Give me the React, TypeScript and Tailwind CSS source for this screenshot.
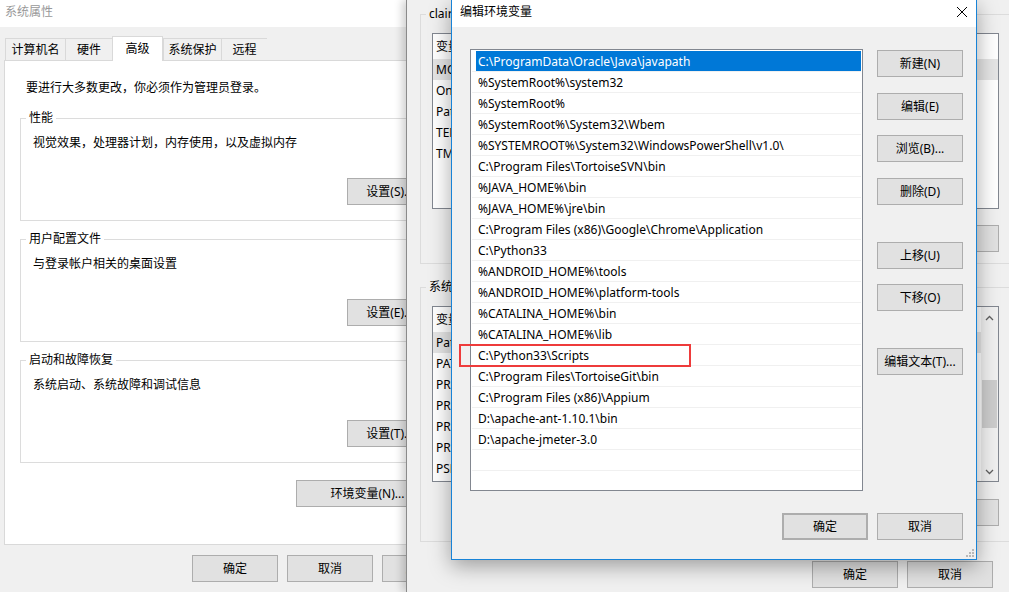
import React from 'react';

const FONT = "font-['Noto_Sans','Noto_Sans_CJK_SC',sans-serif]";

function Btn({ children, className = '', dim = false }: { children?: React.ReactNode; className?: string; dim?: boolean }) {
  return (
    <div
      className={`h-[27px] shrink-0 flex items-center justify-center bg-[#e1e1e1] border border-[#adadad] text-[12px] leading-none ${dim ? 'text-[#a0a0a0]' : 'text-black'} ${className}`}
    >
      {children}
    </div>
  );
}

function Group({ label, className = '', children }: { label: string; className?: string; children?: React.ReactNode }) {
  return (
    <fieldset className={`border border-[#dcdcdc] ${className}`}>
      <legend className="ml-[5px] px-[3px] text-[12px] leading-[16px]">{label}</legend>
      {children}
    </fieldset>
  );
}

const pathItems = [
  'C:\\ProgramData\\Oracle\\Java\\javapath',
  '%SystemRoot%\\system32',
  '%SystemRoot%',
  '%SystemRoot%\\System32\\Wbem',
  '%SYSTEMROOT%\\System32\\WindowsPowerShell\\v1.0\\',
  'C:\\Program Files\\TortoiseSVN\\bin',
  '%JAVA_HOME%\\bin',
  '%JAVA_HOME%\\jre\\bin',
  'C:\\Program Files (x86)\\Google\\Chrome\\Application',
  'C:\\Python33',
  '%ANDROID_HOME%\\tools',
  '%ANDROID_HOME%\\platform-tools',
  '%CATALINA_HOME%\\bin',
  '%CATALINA_HOME%\\lib',
  'C:\\Python33\\Scripts',
  'C:\\Program Files\\TortoiseGit\\bin',
  'C:\\Program Files (x86)\\Appium',
  'D:\\apache-ant-1.10.1\\bin',
  'D:\\apache-jmeter-3.0',
  '',
  '',
];

const userVars = [
  ['MOZ_PLUGIN_PATH', 'C:\\Program Files (x86)\\Foxit Software\\plugins\\'],
  ['OneDrive', 'C:\\Users\\claire\\OneDrive'],
  ['Path', 'C:\\Users\\claire\\AppData\\Local\\Microsoft\\WindowsApps;'],
  ['TEMP', '%USERPROFILE%\\AppData\\Local\\Temp'],
  ['TMP', '%USERPROFILE%\\AppData\\Local\\Temp'],
];

const sysVars = [
  ['Path', 'C:\\ProgramData\\Oracle\\Java\\javapath;%SystemRoot%'],
  ['PATHEXT', '.COM;.EXE;.BAT;.CMD;.VBS;.VBE;.JS'],
  ['PROCESSOR_ARCHITECTURE', 'AMD64'],
  ['PROCESSOR_IDENTIFIER', 'Intel64 Family 6 Model 60'],
  ['PROCESSOR_LEVEL', '6'],
  ['PROCESSOR_REVISION', '3c03'],
  ['PSModulePath', '%ProgramFiles%\\WindowsPowerShell\\Modules'],
];

function VarList({ rows, scroll = false }: { rows: string[][]; scroll?: boolean }) {
  return (
    <div className="ml-[11px] w-[567px] h-[176px] border border-[#828790] bg-white flex">
      <div className="flex-1 overflow-hidden">
        <div className="h-[25px] flex items-center pl-[3px] pt-[1px] text-[12px]">
          <span className="w-[160px]">变量</span>
          <span>值</span>
        </div>
        {rows.map((r, i) => (
          <div key={i} className={`h-[21px] flex items-center pl-[3px] pt-[1px] text-[12px] ${i === 0 ? 'bg-[#e5e5e5]' : ''}`}>
            <span className="w-[160px] whitespace-nowrap">{r[0]}</span>
            <span className="whitespace-nowrap">{r[1]}</span>
          </div>
        ))}
      </div>
      {scroll && (
        <div className="w-[17px] h-full bg-[#f0f0f0] flex flex-col items-center">
          <svg width="9" height="6" viewBox="0 0 9 6" className="mt-[8px]">
            <path d="M1 5 L4.5 1.5 L8 5" fill="none" stroke="#606060" strokeWidth="1.3" />
          </svg>
          <div className="mt-[59px] w-[15px] h-[48px] bg-[#cdcdcd]" />
          <div className="flex-1" />
          <svg width="9" height="6" viewBox="0 0 9 6" className="mb-[6px]">
            <path d="M1 1 L4.5 4.5 L8 1" fill="none" stroke="#606060" strokeWidth="1.3" />
          </svg>
        </div>
      )}
    </div>
  );
}

function SystemProperties() {
  const tabs = [
    { t: '计算机名', w: 'w-[60px]' },
    { t: '硬件', w: 'w-[47px]' },
    { t: '高级', w: 'w-[51px]', active: true },
    { t: '系统保护', w: 'w-[58px]' },
    { t: '远程', w: 'w-[46px]' },
  ];
  return (
    <div className="absolute left-0 top-0 w-[406px] h-[592px] overflow-hidden bg-[#f0f0f0]">
      <div className="w-[440px]">
        <div className="h-[27px] bg-white pl-[5px] pb-[3px] flex items-center text-[12px] text-[#999]">系统属性</div>
        <div className="mt-[9px] pl-[5px] h-[24px] flex items-end relative z-10">
          {tabs.map((tab) =>
            tab.active ? (
              <div key={tab.t} className={`${tab.w} h-[25px] -mb-[1px] bg-white border border-b-0 border-[#d9d9d9] flex items-start justify-center pt-[3px] text-[12px]`}>
                {tab.t}
              </div>
            ) : (
              <div key={tab.t} className={`${tab.w} h-[22px] bg-[#f0f0f0] border border-b-0 border-r-0 border-[#d9d9d9] flex items-center justify-center pt-[1px] text-[12px]`}>
                {tab.t}
              </div>
            )
          )}
        </div>
        <div className="mx-[4px] h-[485px] bg-white border border-[#d9d9d9] pl-[15px] pt-[19px]">
          <div className="pl-[6px] text-[12px] leading-[16px]">要进行大多数更改，你必须作为管理员登录。</div>
          <Group label="性能" className="mt-[14px] w-[420px] pb-[15px]">
            <div className="mt-[9px] pl-[12px] text-[12px] leading-[16px]">视觉效果，处理器计划，内存使用，以及虚拟内存</div>
            <Btn className="mt-[27px] ml-[326px] w-[86px]">设置(S)...</Btn>
          </Group>
          <Group label="用户配置文件" className="mt-[10px] w-[420px] pb-[15px]">
            <div className="mt-[9px] pl-[12px] text-[12px] leading-[16px]">与登录帐户相关的桌面设置</div>
            <Btn className="mt-[27px] ml-[326px] w-[86px]">设置(E)...</Btn>
          </Group>
          <Group label="启动和故障恢复" className="mt-[10px] w-[420px] pb-[15px]">
            <div className="mt-[9px] pl-[12px] text-[12px] leading-[16px]">系统启动、系统故障和调试信息</div>
            <Btn className="mt-[27px] ml-[326px] w-[86px]">设置(T)...</Btn>
          </Group>
          <Btn className="mt-[17px] ml-[276px] w-[137px] pl-[6px]">环境变量(N)...</Btn>
        </div>
        <div className="mt-[10px] pl-[192px] flex gap-[9px]">
          <Btn className="w-[86px]">确定</Btn>
          <Btn className="w-[86px]">取消</Btn>
          <Btn className="w-[86px] bg-[#cfcfcf]" dim>应用(A)</Btn>
        </div>
      </div>
    </div>
  );
}

function EnvVariables() {
  return (
    <div className="absolute left-[406px] top-0 w-[700px] h-[592px] bg-[#f0f0f0] border-l border-[#8a8a8a] shadow-[-4px_0_8px_rgba(0,0,0,0.18)]">
      <Group label="claire 的用户变量(U)" className="ml-[13px] mt-[6px] w-[600px] pb-[11px]">
        <div className="mt-[11px]">
          <VarList rows={userVars} />
        </div>
        <div className="mt-[16px] ml-[11px] w-[567px] flex justify-end gap-[8px]">
          <Btn className="w-[86px]">新建(N)...</Btn>
          <Btn className="w-[86px]">编辑(E)...</Btn>
          <Btn className="w-[86px]">删除(D)</Btn>
        </div>
      </Group>
      <Group label="系统变量(S)" className="ml-[13px] mt-[15px] w-[600px] pb-[15px]">
        <div className="mt-[11px]">
          <VarList rows={sysVars} scroll />
        </div>
        <div className="mt-[17px] ml-[11px] w-[567px] flex justify-end gap-[8px]">
          <Btn className="w-[86px]">新建(W)...</Btn>
          <Btn className="w-[86px]">编辑(I)...</Btn>
          <Btn className="w-[86px]">删除(L)</Btn>
        </div>
      </Group>
      <div className="mt-[19px] ml-[405px] flex gap-[9px]">
        <Btn className="w-[86px]">确定</Btn>
        <Btn className="w-[86px]">取消</Btn>
      </div>
    </div>
  );
}

function EditEnv() {
  const sideButtons = [
    { t: '新建(N)', m: 'mt-[1px]' },
    { t: '编辑(E)', m: 'mt-[16px]' },
    { t: '浏览(B)...', m: 'mt-[15px]' },
    { t: '删除(D)', m: 'mt-[16px]' },
    { t: '上移(U)', m: 'mt-[37px]' },
    { t: '下移(O)', m: 'mt-[15px]' },
    { t: '编辑文本(T)...', m: 'mt-[37px]' },
  ];
  return (
    <div className="absolute left-[451px] top-0 w-[526px] h-[560px] bg-[#f0f0f0] border border-t-0 border-[#1883d7] shadow-[0_6px_20px_rgba(0,0,0,0.35)] flex flex-col">
      <div className="h-[27px] bg-white pl-[8px] pr-[8px] pb-[3px] flex items-center justify-between text-[12px]">
        <span>编辑环境变量</span>
        <svg width="12" height="12" viewBox="0 0 12 12">
          <path d="M1 1 L11 11 M11 1 L1 11" stroke="#000" strokeWidth="1" />
        </svg>
      </div>
      <div className="flex pl-[18px] pt-[22px]">
        <div className="w-[393px] h-[442px] border border-[#828790] bg-white p-[1px] overflow-hidden">
          {pathItems.map((p, i) => (
            <div key={i} className="h-[21px] border-b border-[#f0f0f0] pl-[4px]">
              <div className={`h-full flex items-center pl-[2px] pt-[1px] text-[12px] whitespace-nowrap ${i === 0 ? 'bg-[#0078d7] text-white' : 'text-black'}`}>
                {p}
              </div>
            </div>
          ))}
        </div>
        <div className="ml-[14px] flex flex-col">
          {sideButtons.map((b) => (
            <Btn key={b.t} className={`w-[86px] ${b.m}`}>
              {b.t}
            </Btn>
          ))}
        </div>
      </div>
      <div className="mt-[22px] pr-[13px] flex justify-end gap-[9px]">
        <Btn className="w-[86px] border-2 border-[#0078d7]">确定</Btn>
        <Btn className="w-[86px]">取消</Btn>
      </div>
      <div className="flex-1 flex justify-end items-end pr-[2px] pb-[2px]">
        <svg width="8" height="8" viewBox="0 0 8 8">
          <rect x="6" y="0" width="2" height="2" fill="#b8b8b8" />
          <rect x="3" y="3" width="2" height="2" fill="#b8b8b8" />
          <rect x="6" y="3" width="2" height="2" fill="#b8b8b8" />
          <rect x="0" y="6" width="2" height="2" fill="#b8b8b8" />
          <rect x="3" y="6" width="2" height="2" fill="#b8b8b8" />
          <rect x="6" y="6" width="2" height="2" fill="#b8b8b8" />
        </svg>
      </div>
      <div className="absolute left-[7px] top-[344px] w-[232px] h-[23px] border-2 border-[#ee3b3b]" />
    </div>
  );
}

export default function App() {
  return (
    <div className={`relative w-[1009px] h-[592px] overflow-hidden bg-[#f0f0f0] text-black ${FONT}`}>
      <SystemProperties />
      <EnvVariables />
      <EditEnv />
    </div>
  );
}
